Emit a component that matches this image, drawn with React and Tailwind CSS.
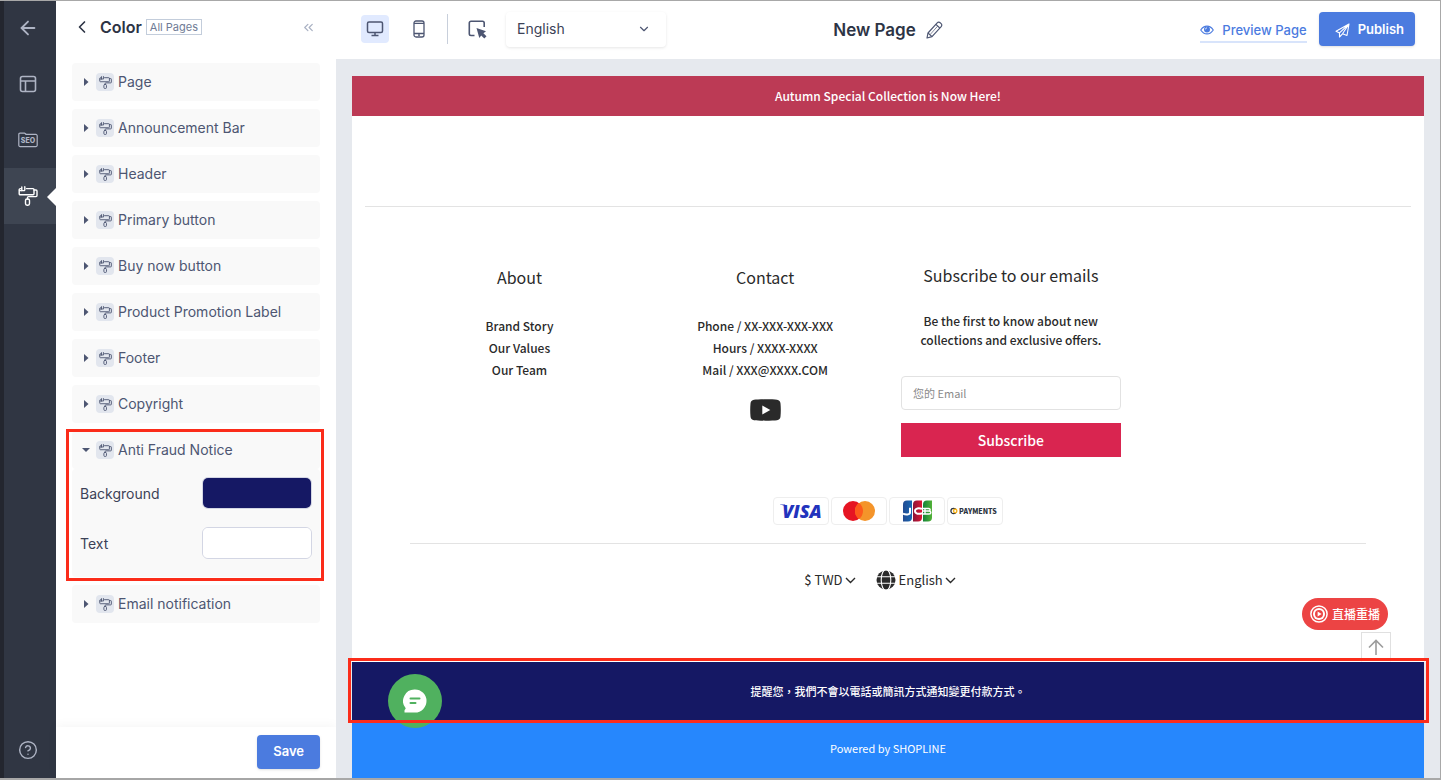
import React, { useState } from "react";
import { ArrowLeft, ChevronDown, ChevronLeft, ChevronsLeft, CircleHelp } from "lucide-react";

const SECTIONS_BEFORE = [
  "Page",
  "Announcement Bar",
  "Header",
  "Primary button",
  "Buy now button",
  "Product Promotion Label",
  "Footer",
  "Copyright",
];

function RollerIcon({ className }) {
  return (
    <svg viewBox="0 0 20 20" fill="none" stroke="currentColor" strokeWidth="1.4" strokeLinejoin="round" strokeLinecap="round" className={className}>
      <path d="M8.5 2.600H15a1 1 0 0 1 1 1v4.200a1 1 0 0 1-1 1H2.200a1 1 0 0 1-1-1V3.800a1.200 1.200 0 0 1 1.200-1.200h1" />
      <path d="M3.800 1v3.800M6.800 .8v3.200M1.500 4.600h5" />
      <path d="M16 4h2a1 1 0 0 1 1 1v4.600a1 1 0 0 1-1 1h-7.600a.9.9 0 0 0-.9.9v1.500" />
      <rect x="7.5" y="13" width="4" height="6.2" rx="1.6" />
    </svg>
  );
}

function LayoutIcon() {
  return (
    <svg width="18" height="18" viewBox="0 0 18 18" fill="none" stroke="currentColor" strokeWidth="1.6">
      <rect x="1.5" y="1.5" width="15" height="15" rx="2" />
      <path d="M1.5 6h15M6.5 6v10.5" />
    </svg>
  );
}

function SeoIcon() {
  return (
    <svg width="20" height="16" viewBox="0 0 20 16" fill="none">
      <path d="M.8 13V2.3A1.2 1.2 0 0 1 2 1.1h4.4c.9 0 1.1 1.3 2 1.3h9.4A1.4 1.4 0 0 1 19.2 3.8v9.4a1.4 1.4 0 0 1-1.4 1.4H2.2A1.4 1.4 0 0 1 .8 13z" stroke="currentColor" strokeWidth="1.2" />
      <text x="10" y="11" textAnchor="middle" fontSize="7" fontWeight="800" fontFamily="Inter, sans-serif" fill="currentColor">SEO</text>
    </svg>
  );
}

function SectionHeader({ label, open, onToggle }) {
  return (
    <button type="button" aria-expanded={open} onClick={onToggle} className="flex h-[38px] w-full items-center rounded bg-[#f9f9f9] pl-2.5 text-left text-[14px] text-[#4d5672]">
      <svg width="8" height="8" viewBox="0 0 8 8" fill="currentColor" className="mr-1.5 shrink-0">
        {open ? <path d="M0 2h8L4 6z" /> : <path d="M2 0l4.5 4L2 8z" />}
      </svg>
      <span className="mr-1 flex size-[18px] items-center justify-center rounded bg-[#e2e6ee]">
        <RollerIcon className="size-[13px]" />
      </span>
      <span className="pb-0.5">{label}</span>
    </button>
  );
}

function ColorField({ id, label, value, onChange }) {
  return (
    <div className="flex items-center justify-between">
      <label htmlFor={id} className="text-[14px] text-[#3c4257]">{label}</label>
      <input
        id={id}
        type="color"
        value={value}
        onChange={(e) => onChange(e.target.value)}
        className="h-8 w-[110px] appearance-none overflow-hidden rounded-md border border-[#d3d6e4] bg-white p-0 [&::-webkit-color-swatch]:border-0 [&::-webkit-color-swatch-wrapper]:p-0"
      />
    </div>
  );
}

function NavRail() {
  return (
    <nav className="flex w-14 shrink-0 flex-col border-l-4 border-[#23262f] bg-[#303643] text-[#aeb4c4]">
      <button type="button" aria-label="Back" className="flex h-[55px] items-center justify-center pr-1 pb-0.5">
        <ArrowLeft className="size-[22px]" strokeWidth={2} />
      </button>
      <button type="button" aria-label="Layout" className="flex h-14 items-center justify-center pr-1"><LayoutIcon /></button>
      <button type="button" aria-label="SEO" className="flex h-14 items-center justify-center pr-1"><SeoIcon /></button>
      <button type="button" aria-label="Color" className="relative flex h-14 items-center justify-center bg-[#3e4552] pr-1 text-white">
        <RollerIcon className="size-5" />
        <svg width="9" height="18" viewBox="0 0 9 18" className="absolute top-5 right-0 fill-white"><path d="M9 0v18L0 9z" /></svg>
      </button>
      <button type="button" aria-label="Help" className="mt-auto flex h-14 items-center justify-center pr-1">
        <CircleHelp className="size-5" strokeWidth={1.7} />
      </button>
    </nav>
  );
}

function ColorPanel() {
  const [open, setOpen] = useState({ "Anti Fraud Notice": true });
  const [background, setBackground] = useState("#151864");
  const [text, setText] = useState("#ffffff");
  const toggle = (name) => setOpen((o) => ({ ...o, [name]: !o[name] }));

  return (
    <aside className="flex w-[280px] shrink-0 flex-col bg-white">
      <header className="flex h-[62px] items-start px-4 pt-3">
        <div className="flex h-7 w-full items-center">
          <button type="button" aria-label="Go back" className="flex w-7 justify-start text-[#2d3445]"><ChevronLeft className="size-5" strokeWidth={2} /></button>
          <h2 className="text-[16px] font-semibold text-[#2d3445]">Color</h2>
          <span className="ml-1 border border-[#c3cddb] px-[3px] text-[11px] leading-[14px] text-[#6f7b95]">All Pages</span>
          <button type="button" aria-label="Collapse panel" className="mr-1 ml-auto text-[#a9b1c3]"><ChevronsLeft className="size-[15px]" strokeWidth={2} /></button>
        </div>
      </header>
      <div className="flex flex-1 flex-col gap-2 px-4">
        {SECTIONS_BEFORE.map((name) => (
          <SectionHeader key={name} label={name} open={!!open[name]} onToggle={() => toggle(name)} />
        ))}
        <section className="relative">
          <SectionHeader label="Anti Fraud Notice" open={!!open["Anti Fraud Notice"]} onToggle={() => toggle("Anti Fraud Notice")} />
          {open["Anti Fraud Notice"] && (
            <div className="flex flex-col gap-[18px] rounded bg-[#f9f9f9] px-2 pt-2 pb-[18px]">
              <ColorField id="notice-background" label="Background" value={background} onChange={setBackground} />
              <ColorField id="notice-text" label="Text" value={text} onChange={setText} />
            </div>
          )}
          <div className="pointer-events-none absolute -top-0.5 -right-1 -bottom-1 -left-1.5 border-3 border-[#fb2c1a]" />
        </section>
        <SectionHeader label="Email notification" open={!!open["Email notification"]} onToggle={() => toggle("Email notification")} />
      </div>
      <footer className="flex justify-end px-4 pt-2 pb-[9px] shadow-[0_-2px_10px_rgba(0,0,0,0.04)]">
        <button type="button" className="h-[34px] rounded bg-[#4b7bdf] px-4 text-[13px] font-semibold text-white shadow-sm">Save</button>
      </footer>
    </aside>
  );
}

function Toolbar() {
  return (
    <header className="grid h-[58px] shrink-0 grid-cols-[1fr_auto_1fr] items-center bg-white px-[25px] pb-0.5">
      <div className="flex items-center text-[#4d5672]">
        <button type="button" aria-label="Desktop view" className="flex size-7 items-center justify-center rounded bg-[#e1eaff]">
          <svg width="18" height="18" viewBox="0 0 18 18" fill="none" stroke="currentColor" strokeWidth="1.5">
            <rect x="1.5" y="2" width="15" height="10.5" rx="1.5" />
            <path d="M9 12.5V15M5.5 15.5h7" />
          </svg>
        </button>
        <button type="button" aria-label="Mobile view" className="ml-4 flex w-7 items-center justify-center">
          <svg width="12" height="18" viewBox="0 0 12 18" fill="none" stroke="currentColor" strokeWidth="1.3">
            <rect x="1" y="1" width="10" height="16" rx="2" />
            <path d="M1 3.3h10M1 13.5h10M5 15.2h2" />
          </svg>
        </button>
        <span className="ml-3.5 h-[30px] w-px bg-[#c8cfdb]" />
        <button type="button" aria-label="Select element" className="ml-5 flex items-center">
          <svg width="19" height="19" viewBox="0 0 19 19" fill="none">
            <path d="M6.5 15.500H3A1.700 1.700 0 0 1 1.300 13.800V3A1.700 1.700 0 0 1 3 1.300h11.500A1.700 1.700 0 0 1 16.200 3v4" stroke="currentColor" strokeWidth="1.6" />
            <path d="M8.500 8l9.500 3.200-2.600 2 3.100 3.100-2.200 2.200-3.100-3.100-1.900 2.700z" fill="currentColor" />
          </svg>
        </button>
        <div className="relative ml-[19px]">
          <select aria-label="Language" className="h-[35px] w-40 appearance-none rounded bg-white pb-0.5 pl-[11px] text-[14px] text-[#3c4257] shadow-[0_1px_3px_rgba(0,0,0,0.1)]">
            <option>English</option>
          </select>
          <ChevronDown className="pointer-events-none absolute top-2.5 right-[15px] size-[14px]" strokeWidth={2} />
        </div>
      </div>
      <div className="flex items-center gap-2.5 pt-0.5">
        <h1 className="pt-0.5 text-[17px] font-semibold text-[#2d3445]">New Page</h1>
        <button type="button" aria-label="Rename page" className="text-[#4d5672]">
          <svg width="17" height="18" viewBox="0 0 17 18" fill="none" stroke="currentColor" strokeWidth="1.2" strokeLinejoin="round">
            <path d="M1 17l1-5L11.200 1.900a2.100 2.100 0 0 1 3-.1l.9.800a2.100 2.100 0 0 1 .1 3L6 15.600z" />
            <path d="M9.900 3.400l3.900 3.600M2 12l4 3.600" />
            <path d="M4 13.700l7.600-8.500" strokeWidth=".7" />
          </svg>
        </button>
      </div>
      <div className="flex items-center justify-end gap-3 text-[13px]">
        <a href="#preview" className="flex items-center gap-2 border-b-2 border-[#d8e4fb] pt-1 font-medium text-[#4b7bdf]">
          <svg width="14" height="10" viewBox="0 0 15 10" className="shrink-0">
            <path d="M.8 5C2.500 2.300 4.800.8 7.500.8S12.500 2.300 14.200 5C12.500 7.700 10.200 9.200 7.500 9.200S2.500 7.700.8 5z" fill="none" stroke="currentColor" strokeWidth="1.2" />
            <circle cx="7.500" cy="4.500" r="3.200" fill="currentColor" />
            <path d="M5.800 4.400a1.700 1.700 0 0 1 1.700-1.700" fill="none" stroke="white" strokeWidth=".8" />
          </svg>
          <span className="leading-[22px]">Preview Page</span>
        </a>
        <button type="button" className="flex h-[34px] items-center gap-2 rounded bg-[#4b7bdf] pt-0.5 pr-[11px] pl-4 font-semibold text-white shadow-sm">
          <svg width="15" height="15" viewBox="0 0 15 15" fill="none" stroke="currentColor" strokeWidth="1.1" strokeLinejoin="round">
            <path d="M14 1L1 8.300l3.500 1.600L14 1 12 12.500 7.500 10.800M4.500 9.900V14l3-3.200L14 1" />
          </svg>
          Publish
        </button>
      </div>
    </header>
  );
}

function PaymentCard({ label, children }) {
  return (
    <li aria-label={label} className="flex h-7 w-14 items-center justify-center rounded-sm border border-[#eeeeee] bg-white">
      <svg width="50" height="24" viewBox="0 0 50 24">{children}</svg>
    </li>
  );
}

function Payments() {
  return (
    <ul className="flex justify-center gap-0.5">
      <PaymentCard label="Visa">
        <text x="26" y="18.500" textAnchor="middle" fontFamily="Open Sans, sans-serif" fontSize="18" fontWeight="800" fontStyle="italic" fill="#2233bd">VISA</text>
        <path d="M4 5.600h5l1.600 2.800C9 6.800 6.500 6.100 4 5.800z" fill="#2233bd" />
      </PaymentCard>
      <PaymentCard label="Mastercard">
        <circle cx="19" cy="12" r="10" fill="#e61523" />
        <circle cx="31" cy="12" r="10" fill="#f4942a" />
        <path d="M25 4a10 10 0 0 1 0 16 10 10 0 0 1 0-16z" fill="#fd5a1c" />
      </PaymentCard>
      <PaymentCard label="JCB">
        <defs>
          <linearGradient id="jcb-blue"><stop offset="0" stopColor="#234b91" /><stop offset="1" stopColor="#1767b3" /></linearGradient>
          <linearGradient id="jcb-red"><stop offset="0" stopColor="#8b1538" /><stop offset="1" stopColor="#dc1632" /></linearGradient>
          <linearGradient id="jcb-green"><stop offset="0" stopColor="#128238" /><stop offset="1" stopColor="#53b237" /></linearGradient>
        </defs>
        <path d="M11 5.500a4 4 0 0 1 4-4h5v17a4 4 0 0 1-4 4h-5z" fill="url(#jcb-blue)" />
        <path d="M21 5.500a4 4 0 0 1 4-4h5v17a4 4 0 0 1-4 4h-5z" fill="url(#jcb-red)" />
        <path d="M31 5.500a4 4 0 0 1 4-4h5v17a4 4 0 0 1-4 4h-5z" fill="url(#jcb-green)" />
        <g fill="none" stroke="white" strokeWidth="2">
          <path d="M18 8.800v4.700c0 2.400-4.500 2.400-7 1.200M30 9.900c-3-1-7-.8-7 2.200s4 3.200 7 2.200" />
          <path d="M31 9.500h5.500c2.200 0 2.200 2.500 0 2.500H31h6c2.500 0 2.500 3 0 3h-6M33 9v6" strokeWidth="1.4" />
        </g>
      </PaymentCard>
      <PaymentCard label="Payments">
        <circle cx="3.500" cy="12" r="2.600" fill="none" stroke="#2c3340" strokeWidth="1.3" />
        <circle cx="5.200" cy="12" r="1.700" fill="white" stroke="#f6b21b" strokeWidth="1.4" />
        <text x="9" y="15" fontFamily="'Noto Sans CJK TC', sans-serif" fontSize="7" fontWeight="900" fill="#2c3340">PAYMENTS</text>
      </PaymentCard>
    </ul>
  );
}

function Globe() {
  return (
    <svg width="20" height="20" viewBox="0 0 20 20">
      <circle cx="10" cy="10" r="9.500" fill="#2a2a2a" />
      <g fill="none" stroke="white" strokeWidth="1.1">
        <ellipse cx="10" cy="10" rx="4.800" ry="10.500" />
        <path d="M0 6.800h20M0 13.200h20" />
      </g>
    </svg>
  );
}

function StoreSelect({ label, value }) {
  return (
    <div className="flex items-center gap-0.5">
      <select aria-label={label} className="field-sizing-content appearance-none bg-transparent text-[13px]">
        <option>{value}</option>
      </select>
      <svg width="11" height="7" viewBox="0 0 11 7" fill="none" stroke="currentColor" strokeWidth="1.4"><path d="M1 1l4.500 4.500L10 1" /></svg>
    </div>
  );
}

function StoreFooter() {
  return (
    <div className="mx-auto flex w-11/12 flex-1 flex-col text-[#2a2a2a]">
      <div className="grid grid-cols-4 text-center text-[12px] font-medium">
        <div className="px-[13px] pt-[58px]">
          <h3 className="text-[16px] leading-6 font-normal">About</h3>
          <ul className="mt-[26px] leading-[22px]">
            {["Brand Story", "Our Values", "Our Team"].map((t) => (
              <li key={t}><a href="#about">{t}</a></li>
            ))}
          </ul>
        </div>
        <div className="flex flex-col items-center px-[13px] pt-[58px]">
          <h3 className="text-[16px] leading-6 font-normal">Contact</h3>
          <ul className="mt-[26px] leading-[22px]">
            <li>Phone / XX-XXX-XXX-XXX</li>
            <li>Hours / XXXX-XXXX</li>
            <li>Mail / XXX@XXXX.COM</li>
          </ul>
          <a href="#youtube" aria-label="YouTube" className="mt-[18px]">
            <svg width="31" height="22" viewBox="0 0 31 22">
              <path d="M4 .8C8 .2 23 .2 27 .8c2.200.3 3.300 1.500 3.500 3.700.4 4.300.4 8.700 0 13-.2 2.200-1.300 3.400-3.500 3.700-4 .6-19 .6-23 0C1.800 20.900.7 19.700.5 17.500c-.4-4.300-.4-8.700 0-13C.7 2.300 1.800 1.100 4 .8z" fill="#2a2a2a" />
              <path d="M12.300 6.500v9l8-4.500z" fill="white" />
            </svg>
          </a>
        </div>
        <form className="flex flex-col px-[13px] pt-14" onSubmit={(e) => e.preventDefault()}>
          <h3 className="text-[16px] leading-6 font-normal">Subscribe to our emails</h3>
          <p className="mt-6 leading-[19px]">Be the first to know about new<br />collections and exclusive offers.</p>
          <input type="email" aria-label="您的 Email" placeholder="您的 Email" className="mt-[27px] h-[34px] w-full rounded-sm border border-[#e2e2e2] px-[11px] text-[11px] font-normal placeholder:text-[#8a8a8a]" />
          <button type="submit" className="mt-[13px] h-[34px] bg-[#d92550] text-[14px] text-white">Subscribe</button>
        </form>
      </div>
      <div className="mx-[13px] mt-10 border-b border-[#e3e3e3] pb-[18px]">
        <Payments />
      </div>
      <div className="mt-[26px] flex items-center justify-center gap-5 pr-4">
        <StoreSelect label="Currency" value="$ TWD" />
        <div className="flex items-center gap-[3px]">
          <Globe />
          <StoreSelect label="Store language" value="English" />
        </div>
      </div>
    </div>
  );
}

function StorePreview() {
  return (
    <div className="relative flex flex-1 flex-col bg-white font-['Noto_Sans_CJK_TC','Noto_Sans',sans-serif]">
      <p className="bg-[#bc3a55] text-center text-[12px] leading-10 font-medium text-white">Autumn Special Collection is Now Here!</p>
      <hr className="mx-[13px] mt-[90px] border-[#e3e3e3]" />
      <StoreFooter />
      <div className="relative bg-[#151864]">
        <p className="text-center text-[11px] leading-[59px] font-medium text-white">提醒您，我們不會以電話或簡訊方式通知變更付款方式。</p>
        <button type="button" aria-label="Chat" className="absolute top-3 left-9 flex size-[54px] items-center justify-center rounded-full bg-[#50b15f]">
          <svg width="24" height="24" viewBox="0 0 24 24">
            <path d="M12 .5a11.500 11.500 0 1 1 0 23H1.500v-2c0-.8 1-1 1.200-2.200A11.500 11.500 0 0 1 12 .5z" fill="white" />
            <path d="M7.500 9.500h9M7.500 14h5" stroke="#50b15f" strokeWidth="2" strokeLinecap="round" />
          </svg>
        </button>
        <button type="button" aria-label="Back to top" className="absolute right-[33px] bottom-full flex size-[30px] items-center justify-center border border-b-0 border-[#e0e0e0] bg-white text-[#9c9c9c]">
          <svg width="16" height="17" viewBox="0 0 16 17" fill="none" stroke="currentColor" strokeWidth="1.6"><path d="M8 16V1.500M1 8.500l7-7 7 7" /></svg>
        </button>
        <button type="button" className="absolute right-9 bottom-full mb-8 flex h-8 items-center gap-1 rounded-full bg-[#ec4444] px-2 text-[12px] font-medium text-white">
          <svg width="18" height="18" viewBox="0 0 18 18" fill="none" stroke="white">
            <circle cx="9" cy="9" r="8.100" strokeWidth="1.5" />
            <circle cx="9" cy="9" r="6" fill="white" stroke="none" />
            <circle cx="9" cy="9" r="4" fill="#ec4444" stroke="none" />
            <path d="M7.600 6.600v4.800L11.600 9z" fill="white" stroke="none" />
          </svg>
          直播重播
        </button>
        <div className="pointer-events-none absolute -top-1 -right-[5px] -bottom-0.5 -left-1 border-3 border-[#fb2c1a] shadow-[inset_0_1px_0_0_rgba(255,255,255,0.7)]" />
      </div>
      <p className="bg-[#2687fd] pb-0.5 text-center text-[11px] leading-[55px] text-white">Powered by SHOPLINE</p>
    </div>
  );
}

export default function App() {
  return (
    <div className="flex min-h-screen border-t border-r border-b-2 border-[#a8a8a8] font-['Inter',sans-serif]">
      <NavRail />
      <ColorPanel />
      <main className="flex min-w-0 flex-1 flex-col bg-[#e6e9ee]">
        <Toolbar />
        <div className="flex flex-1 flex-col px-4 pt-[17px]">
          <StorePreview />
        </div>
      </main>
    </div>
  );
}
